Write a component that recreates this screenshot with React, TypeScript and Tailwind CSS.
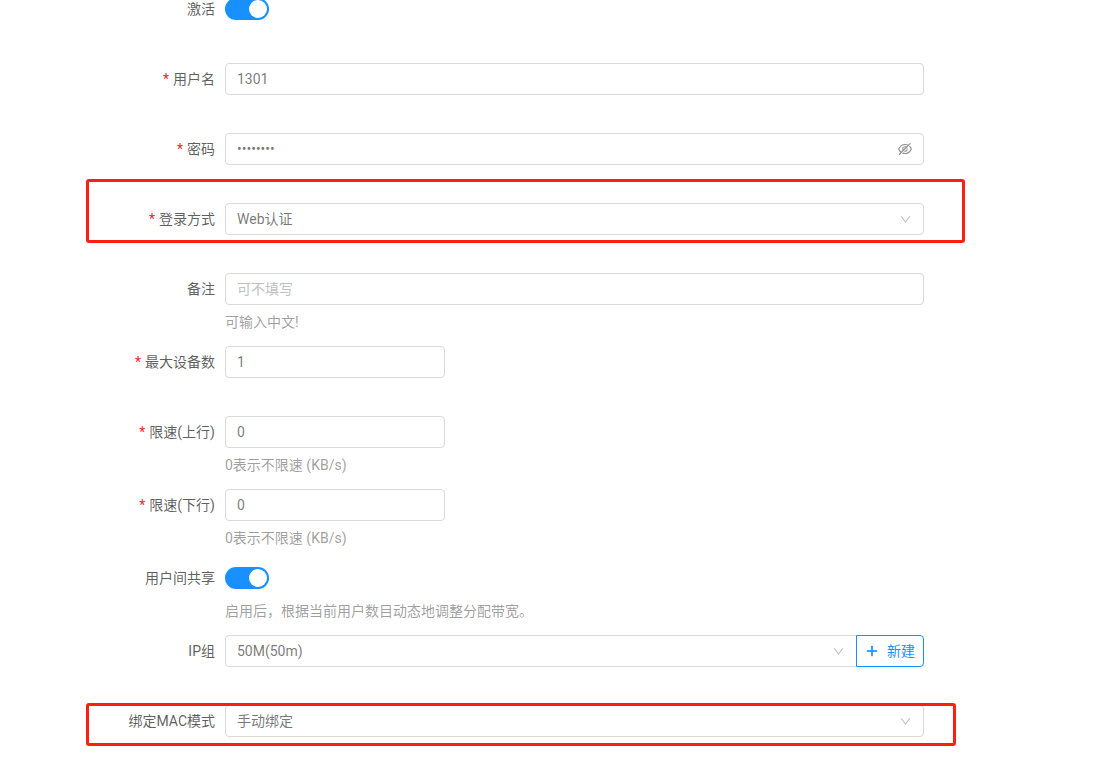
import { AiOutlineDown, AiOutlineEyeInvisible, AiOutlinePlus } from "react-icons/ai";

const fontStack = "font-['Roboto','Noto_Sans_CJK_SC',sans-serif]";

function Row({
  label,
  required,
  help,
  children,
}: {
  label: string;
  required?: boolean;
  help?: string;
  children: React.ReactNode;
}) {
  return (
    <div className={help ? "mb-[41px] flex" : "mb-[38px] flex"}>
      <label className="flex h-8 w-[215px] shrink-0 items-center justify-end text-sm text-black/65">
        {required && <span className="mr-1 text-sm text-[#f5222d]">*</span>}
        {label}
      </label>
      <div className="relative ml-[10px] h-8 w-[699px]">
        {children}
        {help && <div className="absolute left-0 top-[38px] text-sm leading-[22px] text-black/40">{help}</div>}
      </div>
    </div>
  );
}

function Input({ value, placeholder, type = "text", width = "w-full" }: { value?: string; placeholder?: string; type?: string; width?: string }) {
  return (
    <input
      readOnly
      type={type}
      value={value}
      placeholder={placeholder}
      className={`h-8 ${width} rounded border border-[#d9d9d9] bg-white px-[11px] text-sm text-black/55 outline-none placeholder:text-[#bfbfbf]`}
    />
  );
}

function Select({ value, grow }: { value: string; grow?: boolean }) {
  return (
    <div
      className={`flex h-8 items-center justify-between border border-[#d9d9d9] bg-white pl-[11px] pr-[11px] text-sm text-black/55 ${
        grow ? "flex-1 rounded-l" : "w-full rounded"
      }`}
    >
      <span>{value}</span>
      <AiOutlineDown className="text-[13px] text-black/25" />
    </div>
  );
}

function Toggle() {
  return (
    <div className="flex h-8 items-center">
      <div className="flex h-[22px] w-[44px] items-center justify-end rounded-full bg-[#1890ff] pr-[2px]">
        <div className="h-[18px] w-[18px] rounded-full bg-white" />
      </div>
    </div>
  );
}

export default function App() {
  return (
    <div className={`relative h-[774px] overflow-hidden bg-white ${fontStack}`}>
      <div className="-mt-[7px]">
        <Row label="激活">
          <Toggle />
        </Row>
        <Row label="用户名" required>
          <Input value="1301" />
        </Row>
        <Row label="密码" required>
          <Input value="12345678" type="password" />
          <AiOutlineEyeInvisible className="absolute right-[11px] top-2 text-base text-black/45" />
        </Row>
        <Row label="登录方式" required>
          <Select value="Web认证" />
        </Row>
        <Row label="备注" help="可输入中文!">
          <Input placeholder="可不填写" />
        </Row>
        <Row label="最大设备数" required>
          <Input value="1" width="w-[220px]" />
        </Row>
        <Row label="限速(上行)" required help="0表示不限速 (KB/s)">
          <Input value="0" width="w-[220px]" />
        </Row>
        <Row label="限速(下行)" required help="0表示不限速 (KB/s)">
          <Input value="0" width="w-[220px]" />
        </Row>
        <Row label="用户间共享" help="启用后，根据当前用户数目动态地调整分配带宽。">
          <Toggle />
        </Row>
        <Row label="IP组">
          <div className="flex h-8">
            <Select value="50M(50m)" grow />
            <button className="-ml-px flex h-8 w-[68px] items-center justify-center gap-2 rounded-r border border-[#1890ff] bg-white text-sm text-[#1890ff] shadow-[0_2px_0_rgba(0,0,0,0.015)]">
              <AiOutlinePlus className="stroke-[50] text-[14px]" />
              新建
            </button>
          </div>
        </Row>
        <Row label="绑定MAC模式">
          <Select value="手动绑定" />
        </Row>
      </div>

      {/* annotation boxes drawn on top of the form */}
      <div className="pointer-events-none absolute left-[86px] top-[179px] h-[64px] w-[879px] rounded-[3px] border-[3px] border-[#ff1f10]" />
      <div className="pointer-events-none absolute left-[86px] top-[703px] h-[43px] w-[870px] rounded-[3px] border-[3px] border-[#ff1f10]" />
    </div>
  );
}
